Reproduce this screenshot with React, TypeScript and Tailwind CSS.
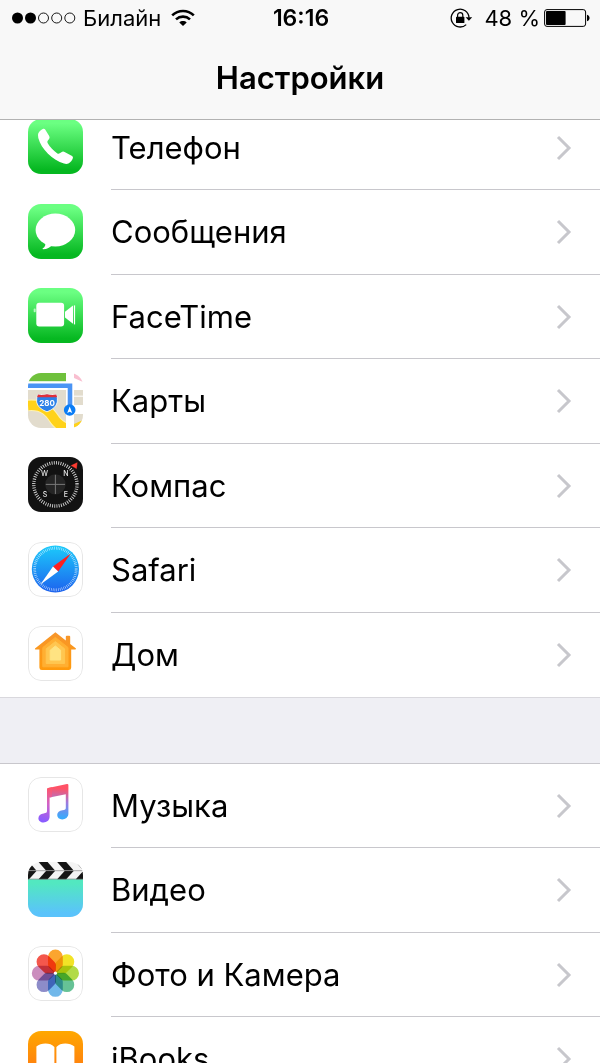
import React from 'react';

interface SettingsItem {
  label: string;
  icon: React.ReactNode;
}

interface AppIconProps {
  children: React.ReactNode;
  bordered?: boolean;
}

const AppIcon: React.FC<AppIconProps> = ({ children, bordered }) => (
  <svg viewBox="0 0 55 55" className="w-[55px] h-[55px] shrink-0 rounded-[13px]" aria-hidden="true">
    {children}
    {bordered && <rect x="0.5" y="0.5" width="54" height="54" rx="12.5" fill="none" stroke="#e6e6e6" />}
  </svg>
);

const GreenBackground: React.FC<{ id: string }> = ({ id }) => (
  <>
    <defs>
      <linearGradient id={id} x1="0" y1="0" x2="0" y2="1">
        <stop offset="0.08" stopColor="#6bff82" />
        <stop offset="0.92" stopColor="#06b821" />
      </linearGradient>
    </defs>
    <rect width="55" height="55" fill={`url(#${id})`} />
  </>
);

const PhoneIcon = () => (
  <AppIcon>
    <GreenBackground id="phone-bg" />
    <path
      d="M10.3 14.2C11.4 12 13.4 10.4 15.3 9.7Q16.4 9.4 17 10.3L21.2 17Q22 18.5 21.2 19.7L19.7 21.7Q19 22.8 19.6 24C21.8 28 25.8 32.1 29.4 34.4Q30.6 35.1 31.7 34.3L34.2 32.8Q35.4 32.2 36.6 32.9L44.1 37Q45.3 37.8 44.9 39C44.2 41.3 42.5 43.4 40.4 44.5Q38.6 45.4 36 44.6C25 41.3 13 30 10.3 19Q9.6 16 10.3 14.2Z"
      fill="#fff"
    />
  </AppIcon>
);

const MessagesIcon = () => (
  <AppIcon>
    <GreenBackground id="messages-bg" />
    <ellipse cx="27.4" cy="26" rx="19.8" ry="16.4" fill="#fff" />
    <path d="M17 37C18 40.5 17.3 42.8 14.6 44.6Q14.2 45.3 15.2 45.3C19 45.2 22.2 43.4 24 41.2Z" fill="#fff" />
  </AppIcon>
);

const FaceTimeIcon = () => (
  <AppIcon>
    <GreenBackground id="facetime-bg" />
    <rect x="5.7" y="20.6" width="2" height="3.6" rx="0.8" fill="#b9f8c1" />
    <rect x="8.3" y="14.7" width="27.8" height="23.8" rx="3" fill="#fff" />
    <path d="M37 23.8L45 17.6V35.8L37 29.6Z" fill="#fff" />
    <rect x="45.9" y="17.4" width="1.2" height="19" fill="#fff" />
  </AppIcon>
);

const MapsIcon = () => (
  <AppIcon>
    <rect width="55" height="55" fill="#fff" />
    <rect width="38" height="8.2" fill="#6fc13c" />
    <path d="M46 0H55V9L46 5Z" fill="#f9bfd0" />
    <rect y="17" width="38" height="38" fill="#e2dccd" />
    <path d="M46 17H55V32H46ZM46 41H55V55H46Z" fill="#e2dccd" />
    <path d="M46 23.2H55" stroke="#fff" strokeWidth="1" />
    <path d="M0 32.5C17 31 23 41 27 47Q31 52.5 39 56" fill="none" stroke="#fff2b0" strokeWidth="11.5" />
    <path d="M0 32.5C17 31 23 41 27 47Q31 52.5 39 56" fill="none" stroke="#ffd21a" strokeWidth="9.5" />
    <path d="M46 51L55 47V55H46Z" fill="#ffd21a" />
    <path d="M38 17H46V55H38Z" fill="#fff" />
    <path d="M0 12.7H42V37" fill="none" stroke="#4a94f4" strokeWidth="4.6" />
    <path
      d="M10 21.5Q14 22.6 19 21.2Q24 22.6 28.2 21.5Q30 25 29.3 29Q28 35.5 19 38.8Q10 35.5 8.6 29Q8.2 25 10 21.5Z"
      fill="#2c81e8"
      stroke="#fff"
      strokeWidth="0.8"
    />
    <path d="M10 21.5Q14 22.6 19 21.2Q24 22.6 28.2 21.5L29.2 24.2H9Z" fill="#e0303a" />
    <text x="19" y="32.8" textAnchor="middle" fontSize="8" fontWeight="700" fill="#fff" className="font-['Inter',sans-serif]">
      280
    </text>
    <circle cx="41.7" cy="37" r="5.8" fill="#0b7df5" />
    <path d="M41.7 33.4L44.2 40L41.7 38.7L39.2 40Z" fill="#fff" />
  </AppIcon>
);

const CompassIcon = () => (
  <AppIcon>
    <rect width="55" height="55" fill="#121212" />
    <circle cx="27.4" cy="27.4" r="21.6" fill="none" stroke="#d4d4d4" strokeWidth="3.4" strokeDasharray="0.9 1.362" />
    <circle cx="27.4" cy="27.4" r="10.2" fill="#252525" />
    <path d="M27.4 17.8V37M17.8 27.4H37" stroke="#777" strokeWidth="1" />
    <g fontSize="7" fontWeight="500" fill="#e4e4e4" textAnchor="middle" className="font-['Inter',sans-serif]">
      <text x="16.6" y="18.8">W</text>
      <text x="37.8" y="18.8">N</text>
      <text x="17" y="40.2">S</text>
      <text x="37.8" y="40.2">E</text>
    </g>
    <path d="M42.4 8.4L49.6 5L48.8 12.2Z" fill="#ff3b30" stroke="#121212" strokeWidth="0.4" />
  </AppIcon>
);

const SafariIcon = () => (
  <AppIcon bordered>
    <defs>
      <linearGradient id="safari-bg" x1="0" y1="0" x2="0" y2="1">
        <stop offset="0" stopColor="#1ccbfb" />
        <stop offset="1" stopColor="#1d62ee" />
      </linearGradient>
    </defs>
    <rect width="55" height="55" fill="#fff" />
    <circle cx="27.4" cy="27" r="23.6" fill="url(#safari-bg)" />
    <circle cx="27.4" cy="27" r="20.8" fill="none" stroke="#fff" strokeOpacity="0.75" strokeWidth="2.8" strokeDasharray="0.6 1.215" />
    <path d="M42.8 11.4L30.2 29.6L25 24.4Z" fill="#ff1f1f" />
    <path d="M12.4 42.6L25 24.4L30.2 29.6Z" fill="#fff" />
  </AppIcon>
);

const HomeIcon = () => (
  <AppIcon bordered>
    <defs>
      <linearGradient id="home-bg" x1="0" y1="0" x2="0" y2="1">
        <stop offset="0" stopColor="#f7962c" />
        <stop offset="1" stopColor="#ff9a0c" />
      </linearGradient>
    </defs>
    <rect width="55" height="55" fill="#fff" />
    <path
      d="M27.4 6.3L37.8 14.6V10.7Q37.8 9.8 38.8 9.8H41.2Q42.2 9.8 42.2 10.7V18L48 22.4Q48.3 23.4 47 23.4H43.2V41.5Q43.2 44 40.8 44H13.8Q11.4 44 11.4 41.5V23.4H7.6Q6.4 23.4 7 22.4Z"
      fill="url(#home-bg)"
    />
    <path d="M27.4 11.4L40 21.5V40.8H14.8V21.5Z" fill="#ffaf32" stroke="#ffaf32" strokeLinejoin="round" />
    <path d="M27.4 15.6L36.6 22.8V37.4H18.2V22.8Z" fill="#ffc650" stroke="#ffc650" strokeLinejoin="round" />
    <path d="M27.4 20L32.6 24.2V34H22.2V24.2Z" fill="#ffe382" stroke="#ffe382" strokeLinejoin="round" />
  </AppIcon>
);

const MusicIcon = () => (
  <AppIcon bordered>
    <defs>
      <linearGradient id="music-left" gradientUnits="userSpaceOnUse" x1="24" y1="10" x2="15" y2="44">
        <stop offset="0.05" stopColor="#ff5668" />
        <stop offset="0.5" stopColor="#d063c8" />
        <stop offset="1" stopColor="#8a5cff" />
      </linearGradient>
      <linearGradient id="music-right" gradientUnits="userSpaceOnUse" x1="38" y1="10" x2="36" y2="42">
        <stop offset="0.05" stopColor="#ff5266" />
        <stop offset="0.5" stopColor="#9b7ae0" />
        <stop offset="0.95" stopColor="#3ca9fb" />
      </linearGradient>
    </defs>
    <rect width="55" height="55" fill="#fff" />
    <path
      d="M19 12.4Q19 11.2 20.2 11L39 7.1Q40.4 6.9 40.4 8.3V36.5C40.4 40.5 37.3 42.4 34.2 42.4C31.3 42.4 29.2 40.6 29.2 38C29.2 35.4 31.4 33.9 34.5 33.3C37 32.8 37.8 32.6 37.8 30.7V17.2L21.6 20.5V12Z"
      fill="url(#music-right)"
    />
    <path
      d="M19 12.4Q19 11.2 20.2 11L24 10.2V20L21.6 20.5V39.6C21.6 43.6 18.6 45.5 15.5 45.5C12.6 45.5 10.4 43.7 10.4 41.2C10.4 38.6 12.5 37.1 15.6 36.5C18.2 36 19 35.7 19 33.8Z"
      fill="url(#music-left)"
    />
  </AppIcon>
);

const VideoIcon = () => (
  <AppIcon>
    <defs>
      <linearGradient id="video-bg" x1="0" y1="0" x2="0" y2="1">
        <stop offset="0.1" stopColor="#52e8c0" />
        <stop offset="0.9" stopColor="#5ac3fb" />
      </linearGradient>
    </defs>
    <rect width="55" height="55" fill="#f4f4f4" />
    <rect y="17.3" width="55" height="37.7" fill="url(#video-bg)" />
    {[-8, 10.6, 29.2, 47.8].map(x => (
      <g key={x} transform={`translate(${x})`} fill="#151515">
        <path d="M0 0H9L16.4 8.5H7.4Z" />
        <path d="M7.4 8.9H16.4L9 17.3H0Z" />
      </g>
    ))}
    <path d="M0 8.7H55" stroke="#777" strokeWidth="0.6" />
    <path d="M0 17.1H55" stroke="#5c6b68" strokeWidth="0.6" />
  </AppIcon>
);

const PETALS = [
  { angle: 0, color: '#fba52f' },
  { angle: 45, color: '#f2e326' },
  { angle: 90, color: '#b2db47' },
  { angle: 135, color: '#66c296' },
  { angle: 180, color: '#71b8ea' },
  { angle: 225, color: '#8d8cc9' },
  { angle: 270, color: '#cb8dbd' },
  { angle: 315, color: '#f4574c' },
];

const PhotosIcon = () => (
  <AppIcon bordered>
    <rect width="55" height="55" fill="#fff" />
    {PETALS.map(petal => (
      <path
        key={petal.angle}
        d="M20 11A7.4 7.4 0 0 1 34.8 11V18.6Q34.8 20.4 33.5 21.7L28.8 26.2Q27.4 27 26 26.2L21.3 21.7Q20 20.4 20 18.6Z"
        fill={petal.color}
        transform={`rotate(${petal.angle} 27.4 27.2)`}
        className="mix-blend-multiply"
      />
    ))}
    <circle cx="27.4" cy="27.2" r="1.6" fill="#fff" />
  </AppIcon>
);

const BooksIcon = () => (
  <AppIcon>
    <defs>
      <linearGradient id="books-bg" x1="0" y1="0" x2="0" y2="1">
        <stop offset="0" stopColor="#ffa800" />
        <stop offset="1" stopColor="#ff6c16" />
      </linearGradient>
    </defs>
    <rect width="55" height="55" fill="url(#books-bg)" />
    <path d="M8.4 15.5C13 11.6 22.5 11.4 26.4 16V44C22 40.4 13 40.4 8.4 42.5Z" fill="#fff" />
    <path d="M46.4 15.5C41.8 11.6 32.3 11.4 28.4 16V44C32.8 40.4 41.8 40.4 46.4 42.5Z" fill="#fff" />
  </AppIcon>
);

const APP_ITEMS: SettingsItem[] = [
  { label: 'Телефон', icon: <PhoneIcon /> },
  { label: 'Сообщения', icon: <MessagesIcon /> },
  { label: 'FaceTime', icon: <FaceTimeIcon /> },
  { label: 'Карты', icon: <MapsIcon /> },
  { label: 'Компас', icon: <CompassIcon /> },
  { label: 'Safari', icon: <SafariIcon /> },
  { label: 'Дом', icon: <HomeIcon /> },
];

const MEDIA_ITEMS: SettingsItem[] = [
  { label: 'Музыка', icon: <MusicIcon /> },
  { label: 'Видео', icon: <VideoIcon /> },
  { label: 'Фото и Камера', icon: <PhotosIcon /> },
  { label: 'iBooks', icon: <BooksIcon /> },
];

const StatusBar = () => (
  <div className="grid grid-cols-[1fr_auto_1fr] items-center h-9 pl-3 pr-2.5 text-[22px] leading-7">
    <div className="flex items-center">
      <svg viewBox="0 0 64 12" className="w-16 h-3 mr-[7px]" aria-label="Сигнал сети">
        <circle cx="5.5" cy="6" r="5.5" />
        <circle cx="18.5" cy="6" r="5.5" />
        <g fill="none" stroke="#000" strokeWidth="0.9">
          <circle cx="31.5" cy="6" r="5" />
          <circle cx="44.7" cy="6" r="5" />
          <circle cx="57.8" cy="6" r="5" />
        </g>
      </svg>
      <span>Билайн</span>
      <svg viewBox="0 0 24 18" className="w-6 h-[18px] ml-2.5" aria-label="Wi-Fi">
        <g fill="none" stroke="#000" strokeWidth="2.6">
          <path d="M1.2 6.4C7.3 0.5 16.7 0.5 22.8 6.4" />
          <path d="M5 10.4C9 6.7 15 6.7 19 10.4" />
        </g>
        <path d="M12 17L8.3 13.4C10.3 11.6 13.7 11.6 15.7 13.4Z" />
      </svg>
    </div>
    <span className="text-[23px] font-semibold">16:16</span>
    <div className="flex items-center justify-end">
      <svg viewBox="0 0 24 20" className="w-6 h-5 mr-2.5" aria-label="Блокировка ориентации">
        <path d="M19 9.6A8.9 8.9 0 1 0 16.2 16.6" fill="none" stroke="#000" strokeWidth="1.3" />
        <path d="M15.6 9.2H22.2L18.9 12.8Z" />
        <rect x="6" y="8.8" width="8.4" height="6.2" rx="0.6" />
        <path d="M7.6 9V7.2A2.6 2.6 0 0 1 12.8 7.2V9" fill="none" stroke="#000" strokeWidth="1.2" />
      </svg>
      <span className="whitespace-nowrap">48 %</span>
      <svg viewBox="0 0 46 18" className="w-[46px] h-[18px] ml-1" aria-label="Заряд батареи">
        <rect x="0.6" y="0.6" width="41" height="16.8" rx="2.4" fill="none" stroke="#000" strokeWidth="1" />
        <rect x="2" y="2" width="19.6" height="14" rx="1" />
        <path d="M43 5.8C46.4 6.6 46.4 11.4 43 12.2Z" />
      </svg>
    </div>
  </div>
);

const SettingsRow: React.FC<{ item: SettingsItem }> = ({ item }) => (
  <li className="h-[84px] even:h-[85px] group">
    <a href="#" className="flex h-full pl-7">
      <div className="flex items-center pb-[3px]">{item.icon}</div>
      <div className="flex flex-1 items-center justify-between ml-7 pr-7 border-b border-[#c8c7cc] group-last:border-transparent">
        <span className="text-[31px] leading-10">{item.label}</span>
        <svg viewBox="0 0 16 26" className="w-4 h-[26px]" aria-hidden="true">
          <path d="M2 2L13 13L2 24" fill="none" stroke="#c7c7cc" strokeWidth="3" />
        </svg>
      </div>
    </a>
  </li>
);

const SettingsGroup: React.FC<{ items: SettingsItem[] }> = ({ items }) => (
  <ul className="bg-white shadow-[0_-1px_#c8c7cc,0_1px_#d9d8dd]">
    {items.map(item => (
      <SettingsRow key={item.label} item={item} />
    ))}
  </ul>
);

export default function App() {
  return (
    <div className="h-screen overflow-hidden bg-[#efeff4] text-black font-['Inter','Liberation_Sans',sans-serif]">
      <header className="relative z-10 bg-[#f8f8f8] border-b border-[#b2b2b2]">
        <StatusBar />
        <h1 className="pt-[22px] pb-[21px] text-center text-[31px] leading-10 font-semibold">Настройки</h1>
      </header>

      {/* The list is scrolled a little way under the header */}
      <main className="-mt-3.5 flex flex-col gap-[67px]">
        <SettingsGroup items={APP_ITEMS} />
        <SettingsGroup items={MEDIA_ITEMS} />
      </main>
    </div>
  );
}
